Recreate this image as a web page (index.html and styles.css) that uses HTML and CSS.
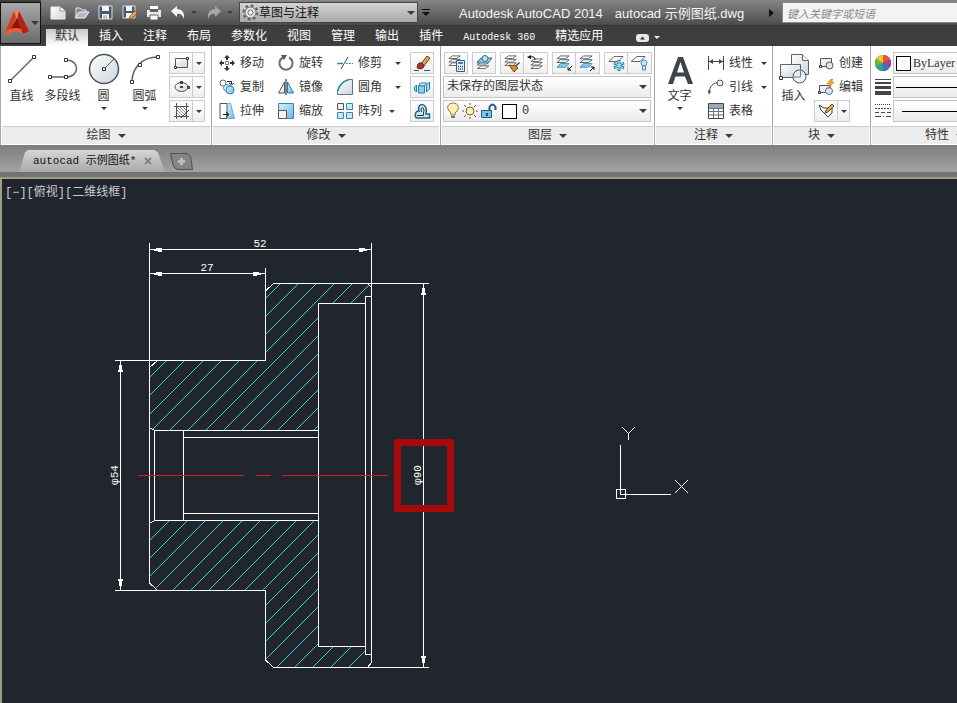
FILE: index.html
```html
<!DOCTYPE html>
<html lang="zh-CN">
<head>
<meta charset="utf-8">
<title>Autodesk AutoCAD 2014 - autocad 示例图纸.dwg</title>
<link rel="stylesheet" href="styles.css">
</head>
<body>
<svg class="defs" aria-hidden="true">
  <defs>
    <linearGradient id="blue" x1="0" y1="0" x2="1" y2="1"><stop offset="0" stop-color="#d9eff9"/><stop offset="1" stop-color="#6db8de"/></linearGradient>
    <linearGradient id="grey" x1="0" y1="0" x2="1" y2="1"><stop offset="0" stop-color="#fff"/><stop offset="1" stop-color="#ccd4da"/></linearGradient>
    <symbol id="layers" viewBox="0 0 16 16"><path d="M5 1h9l-4 3H1zM5 5h9l-4 3H1zM5 9h9l-4 3H1z" fill="#fff" stroke="#555c64"/></symbol>
    <symbol id="layers-blue" viewBox="0 0 16 16"><path d="M5 9h9l-4 4H1z" fill="#85c8ea" stroke="#3e8fb8"/><path d="M5 1h9l-4 3H1zM5 5h9l-4 3H1z" fill="#fff" stroke="#555c64"/></symbol>
  </defs>
</svg>

<header class="top">
  <button class="app" aria-label="应用程序菜单">
    <svg width="24" height="28" viewBox="0 0 24 28"><path d="M9 2h5L3 26l-3-3z" fill="#d63a1e"/><path d="M9 2h5l10 20-6 3z" fill="#b8200f"/><path d="M9 2h5l-2 9z" fill="#f58150"/><path d="M12 9l-7 12q6-3 11-1z" fill="#8c150a"/><path d="M0 23l3 3q7-6 15-1l-2-5Q8 17 0 23z" fill="#ed5a35"/></svg>
    <span class="caret dark"></span>
  </button>
  <div class="bars">
    <div class="titlebar">
      <div class="quick">
        <button aria-label="新建"><svg width="16" height="16"><path d="M1 2h9l5 4v8H1z" fill="url(#grey)" stroke="#eee"/><path d="M10 2v4h5" fill="#fff" stroke="#8b949b"/></svg></button>
        <button aria-label="打开"><svg width="16" height="16"><path d="M2 13V3h4l2 2h4v2" fill="#7d868f" stroke="#e9edf0"/><path d="M1 13l4-6h10l-4 6z" fill="#aebac5" stroke="#eef"/></svg></button>
        <button aria-label="保存"><svg width="16" height="16"><path d="M1 1h13v13H1z" fill="#49596d" stroke="#d8dde2"/><path d="M4 1h7v5H4zM4 9h7v5H4z" fill="#f3f5f6"/><path d="M5 11h4M5 13h4" stroke="#8b949b"/></svg></button>
        <button aria-label="另存为"><svg width="16" height="16"><path d="M1 1h12v12H1z" fill="#49596d" stroke="#d8dde2"/><path d="M4 1h6v5H4zM4 8h6v5H4z" fill="#f3f5f6"/><path d="M7 14l1-3 5-5 2 2-5 5z" fill="#f0a94a" stroke="#73502a" stroke-width=".7"/></svg></button>
        <button aria-label="打印"><svg width="16" height="16"><path d="M4 1h8v5H4z" fill="#fff"/><path d="M1 5h14v7H1z" fill="#e7eaec"/><path d="M4 4h8v3H4z" fill="#58626b"/><path d="M4 10h8v5H4z" fill="#fff" stroke="#58626b"/></svg></button>
        <button aria-label="放弃"><svg width="16" height="16"><path d="M1 6l6-5v3q8 0 7 10-2-6-7-5v3z" fill="#f4f4f4"/></svg></button>
        <button class="thin" aria-label="放弃列表"><span class="caret dark small"></span></button>
        <button class="redo" aria-label="重做"><svg width="16" height="16"><path d="M15 6L9 1v3Q1 4 2 14q2-6 7-5v3z" fill="#a6a6a6"/></svg></button>
        <button class="thin" aria-label="重做列表"><span class="caret dark small"></span></button>
      </div>
      <button class="workspace"><svg width="17" height="17" viewBox="0 0 17 17"><circle cx="8.500" cy="8.500" r="7" fill="none" stroke="#5c5c5c" stroke-width="2" stroke-dasharray="2.750 2.750"/><circle cx="8.500" cy="8.500" r="5.500" fill="#e4e4e4" stroke="#666"/><circle cx="8.500" cy="8.500" r="2.500" fill="#fff" stroke="#666"/></svg><span class="low">草图与注释</span><span class="caret dark end"></span></button>
      <button class="more" aria-label="自定义"><svg width="8" height="8"><path d="M0 0h8v1H0zM0 3h8L4 7z" fill="#111"/></svg></button>
      <div class="caption"><span>Autodesk AutoCAD 2014</span><span>autocad 示例图纸.dwg</span></div>
      <svg class="play" width="5" height="8"><path d="M0 0l5 4-5 4z" fill="#111"/></svg>
      <input class="search" type="text" placeholder="键入关键字或短语" aria-label="键入关键字或短语">
    </div>
    <nav class="tabs">
      <a class="on" href="#">默认</a><a href="#">插入</a><a href="#">注释</a><a href="#">布局</a><a href="#">参数化</a><a href="#">视图</a><a href="#">管理</a><a href="#">输出</a><a href="#">插件</a><a href="#">Autodesk 360</a><a href="#">精选应用</a>
      <button class="min" aria-label="最小化"><svg width="13" height="8"><rect width="13" height="8" rx="3" fill="#e6e6e6"/><path d="M4 5.500h5l-2.500-3z" fill="#333"/></svg><span class="caret light"></span></button>
    </nav>
  </div>
</header>

<main class="ribbon">
  <section class="panel draw">
    <div class="tools">
      <button class="big"><svg width="32" height="32"><path d="M4 28L28 4" stroke="#5d6770" stroke-width="1.500"/><path d="M2.500 26.500h3v3h-3zM26.500 2.500h3v3h-3z" fill="#fff" stroke="#333"/></svg>直线</button>
      <button class="big"><svg width="32" height="32"><path d="M3 24h16c14 0 14-17 0-17" fill="none" stroke="#5d6770" stroke-width="1.500"/><path d="M1.500 22.500h3v3h-3zM17.500 22.500h3v3h-3zM17.500 5.500h3v3h-3z" fill="#fff" stroke="#333"/></svg>多段线</button>
      <button class="big"><svg width="32" height="32"><circle cx="16" cy="16" r="14.500" fill="url(#grey)" stroke="#4d565e" stroke-width="1.500"/><path d="M16 16L26 6" stroke="#4d565e"/><path d="M14.500 14.500h3v3h-3z" fill="#fff" stroke="#333"/></svg>圆<span class="caret dark small"></span></button>
      <button class="big"><svg width="32" height="32"><path d="M3 29C3 16 12 4 29 4" fill="none" stroke="#5d6770" stroke-width="1.500"/><path d="M1.500 27.500h3v3h-3zM9.500 10.500h3v3h-3zM27.500 2.500h3v3h-3z" fill="#fff" stroke="#333"/></svg>圆弧<span class="caret dark small"></span></button>
      <div class="stack">
        <button class="box split" aria-label="矩形"><svg width="17" height="16"><path d="M2.500 3.500h12v9h-12z" fill="url(#grey)" stroke="#555"/><path d="M1.500 11.500h2v2h-2zM13.500 2.500h2v2h-2z" fill="#fff" stroke="#333"/></svg><i><b class="caret dark small"></b></i></button>
        <button class="box split" aria-label="椭圆"><svg width="17" height="16"><ellipse cx="8.500" cy="8" rx="6.500" ry="4.500" fill="url(#grey)" stroke="#4d565e"/><path d="M7 2h3v3H7zM7 7h3v2H7zM14 7h3v3h-3z" fill="#444"/></svg><i><b class="caret dark small"></b></i></button>
        <button class="box split" aria-label="图案填充"><svg width="17" height="16"><path d="M3.500 0v16M1 3.500h15M1 13.500h15M13.500 0v16" stroke="#555"/><path d="M4 7l6 6M4 10l3 3M7 4l6 6M10 4l3 3M4 4l9 9" stroke="#999"/><path d="M16 7l-8 8" stroke="#444"/></svg><i><b class="caret dark small"></b></i></button>
      </div>
    </div>
    <h2>绘图<span class="caret dark"></span></h2>
  </section>

  <section class="panel modify">
    <div class="tools">
      <button class="tool"><svg width="16" height="16"><path d="M8 0l3 3H9v2H7V3H5zM8 16l3-3H9v-2H7v2H5zM0 8l3-3v2h2v2H3v2zM16 8l-3-3v2h-2v2h2v2z" fill="#333"/><path d="M6.500 6.500h3v3h-3z" fill="#fff" stroke="#777"/></svg><span class="low">移动</span></button>
      <button class="tool"><svg width="16" height="16"><path d="M5 2.500A6.500 6.500 0 1 0 11 2.500" fill="none" stroke="#666e76" stroke-width="2"/><path d="M3 0h6L6 5z" fill="#4d565e"/></svg><span class="low">旋转</span></button>
      <button class="tool"><svg width="16" height="16"><path d="M0 8.500h6" stroke="#278fae" stroke-width="1.500"/><path d="M9 8.500h2M12 8.500h2M15 8.500h1" stroke="#278fae"/><path d="M4 14L11 2" stroke="#444"/></svg><span class="low">修剪</span><span class="caret dark small far"></span></button>
      <button class="box" aria-label="删除"><svg width="17" height="17"><path d="M7 9l6-8 3 2-6 8z" fill="#eda43c" stroke="#56412d"/><path d="M4 9q2-2 4-1t2 4l-3 2-4-1z" fill="#b3341d" stroke="#49352b"/><path d="M0 15.500h5M10 15.500h6" stroke="#3c5778"/></svg></button>
      <button class="tool"><svg width="16" height="16"><circle cx="4" cy="4" r="3" fill="#fff" stroke="#666"/><circle cx="8" cy="9" r="3.500" fill="#d4edf8" stroke="#489fc8"/><circle cx="11" cy="11" r="4" fill="url(#blue)" stroke="#3183ad"/><path d="M8 2.500h4.500V5M10 4l2.500 2L15 4" fill="none" stroke="#222"/></svg><span class="low">复制</span></button>
      <button class="tool"><svg width="16" height="16"><path d="M6.500 3v11h-6z" fill="#eee" stroke="#555"/><path d="M9.500 3v11h6z" fill="url(#blue)" stroke="#2b80aa"/><path d="M8 0v16" stroke="#111"/></svg><span class="low">镜像</span></button>
      <button class="tool"><svg width="16" height="16"><path d="M.500 15.500V12Q3 3 12 .500h3.500v15z" fill="url(#grey)" stroke="#5d7380"/><path d="M.500 12Q3 3 12 .500" fill="none" stroke="#2888b1" stroke-width="1.500"/></svg><span class="low">圆角</span><span class="caret dark small far"></span></button>
      <button class="box" aria-label="分解"><svg width="17" height="17"><path d="M4.500 7l2-3h6l-2 3z" fill="#d8f0fa" stroke="#2380aa"/><path d="M4.500 7h6v7h-6z" fill="#8ed0ee" stroke="#2380aa"/><path d="M12.500 6l3-3v7l-3 3zM2.500 6v7L.500 11V8z" fill="#a6dcf3" stroke="#2380aa"/></svg></button>
      <button class="tool"><svg width="16" height="16"><path d="M1 .500h7v15H1z" fill="#fff" stroke="#555"/><path d="M8.500.500h3l4 15h-7z" fill="url(#blue)" stroke="#6badcc"/><path d="M4 11.500h5M7 9l3 2.500L7 14" fill="none" stroke="#111"/></svg><span class="low">拉伸</span></button>
      <button class="tool"><svg width="16" height="16"><path d="M.500.500h15v15h-15z" fill="url(#blue)" stroke="#3487ae"/><path d="M.500 7.500h8v8h-8z" fill="#f7f7f7" stroke="#555"/></svg><span class="low">缩放</span></button>
      <button class="tool"><svg width="16" height="16"><path d="M.500.500h6v6h-6z" fill="#eee" stroke="#555"/><path d="M9.500.500h6v6h-6zM.500 9.500h6v6h-6zM9.500 9.500h6v6h-6z" fill="#c8e9f6" stroke="#3487ae"/></svg><span class="low">阵列</span><span class="caret dark small near"></span></button>
      <button class="box" aria-label="偏移"><svg width="17" height="17"><path d="M3 15h12.500v-4H12c3-12-10-12-7-3-4-1-5 7-2 7z" fill="#cbe8f4" stroke="#1d6687" stroke-width="1.500"/><path d="M3 12.500h6.500V10c2-7-4-7-2-1" fill="none" stroke="#333"/></svg></button>
    </div>
    <h2>修改<span class="caret dark"></span></h2>
  </section>

  <section class="panel layer">
    <div class="tools">
      <div class="row">
        <button class="box" aria-label="图层特性"><svg width="17" height="17"><use href="#layers" width="14" height="14"/><path d="M8.500 5.500h8v11h-8z" fill="#e2f2fa" stroke="#325f87"/><path d="M10 8h5M10 11.500h1M12 11.500h1M14 11.500h1M10 14h1M12 14h1M14 14h1" stroke="#26557e" stroke-width="1.500"/></svg></button>
        <button class="box" aria-label="图层隔离"><svg width="17" height="17"><use href="#layers" y="3" width="15" height="14"/><path d="M5 3h11l-4 5H1z" fill="#8ccdec" stroke="#376d8b"/><circle cx="9" cy="3.500" r="3" fill="#b9e2f5" stroke="#456a80"/></svg></button>
        <span class="group"><button class="box" aria-label="匹配"><svg width="17" height="17"><use href="#layers" width="14" height="14"/><path d="M15 7l1 1-4 4-1-1z" fill="#444"/><path d="M5 10l7 1 2 2-4 4z" fill="#d88c31" stroke="#744616"/></svg></button><button class="box" aria-label="上一个"><svg width="17" height="17"><use href="#layers" x="3" y="3" width="14" height="14"/><path d="M0 2l4-2v4z" fill="#111"/><path d="M4 2q4-1 4 3" fill="none" stroke="#111"/></svg></button></span>
        <span class="group"><button class="box" aria-label="冻结"><svg width="17" height="17"><use href="#layers-blue" width="15" height="15"/><path d="M16 11l-4 4m0-3v3h3" fill="none" stroke="#111"/></svg></button><button class="box" aria-label="解冻"><svg width="17" height="17"><use href="#layers-blue" width="15" height="15"/><path d="M11 16l4-4m-3 0h3v3" fill="none" stroke="#111"/></svg></button></span>
        <span class="group"><button class="box" aria-label="图层冻结"><svg width="17" height="17"><path d="M6 1.500h9l-5 5H1z" fill="#fff" stroke="#666"/><path d="M11 5v11M6 8l10 5M6 13l10-5" stroke="#2d8aa0" stroke-width="3"/><path d="M11 6v9M7 8l8 5M7 13l8-5" stroke="#ccecf2"/></svg></button><button class="box" aria-label="图层关闭"><svg width="17" height="17"><path d="M6 1.500h8l-5 5H0z" fill="#fff" stroke="#666"/><circle cx="13" cy="8" r="3" fill="#c4e6f8" stroke="#488eb6"/><path d="M11.500 11h3v4h-3z" fill="#d9eef8" stroke="#488eb6"/></svg></button></span>
      </div>
      <button class="combo">未保存的图层状态<span class="caret dark end"></span></button>
      <button class="combo current"><svg width="12" height="18"><path d="M4 11C-2 6 1 1 6 1s8 5 2 10v2H4z" fill="#fff0b8" stroke="#8e7435"/><path d="M4 14h4v2H4z" fill="#777"/></svg><svg width="16" height="16"><circle cx="8" cy="8" r="4" fill="#fff0a6" stroke="#776438"/><path d="M8 0v2M8 14v2M0 8h2M14 8h2M2 2l2 2M12 12l2 2M2 14l2-2M12 4l2-2" stroke="#655536"/></svg><svg width="16" height="16"><path d="M.500 7.500h10v7H.500z" fill="#77c1e3" stroke="#215d80"/><path d="M8.500 8V4q3-5 6 0v3" fill="none" stroke="#215d80" stroke-width="2"/><path d="M5 10h2v3H5z" fill="#205677"/></svg><i class="swatch"></i>0<span class="caret dark end"></span></button>
    </div>
    <h2>图层<span class="caret dark"></span></h2>
  </section>

  <section class="panel note">
    <div class="tools">
      <button class="big"><svg width="32" height="32"><path d="M4 31L14 4h5l10 27h-5l-3-7.500h-9.500L9 31zM13 19.500h7L16.500 9z" fill="#3e444a"/></svg>文字<span class="caret dark small"></span></button>
      <div class="stack">
        <button class="tool"><svg width="16" height="16"><path d="M.500 1v14M15.500 1v14M1 6.500h14" stroke="#444"/><path d="M1 6.500l4-2.500v5zM15 6.500L11 4v5z" fill="#444"/></svg><span class="low">线性</span><span class="caret dark small far"></span></button>
        <button class="tool"><svg width="16" height="16"><path d="M1 14C2 7 5 4 9 4" fill="none" stroke="#444"/><circle cx="12" cy="4" r="3" fill="#eee" stroke="#555"/><path d="M0 11l3 1-2 4z" fill="#444"/></svg><span class="low">引线</span><span class="caret dark small far"></span></button>
        <button class="tool"><svg width="16" height="16"><path d="M.500.500h15v15H.500z" fill="#fff" stroke="#444"/><path d="M1 1h14v4H1z" fill="#99a7bd"/><path d="M1 5.500h14M1 8.500h14M1 12h14M5.500 5v10M10.500 5v10" stroke="#667381"/></svg><span class="low">表格</span></button>
      </div>
    </div>
    <h2>注释<span class="caret dark"></span></h2>
  </section>

  <section class="panel block">
    <div class="tools">
      <button class="big"><svg width="32" height="32"><path d="M13.500 1.500h11l6 6v14h-17z" fill="url(#grey)" stroke="#59626a"/><path d="M24.500 1.500v6h6" fill="#fff" stroke="#59626a"/><path d="M2.500 11.500h20v13h-20z" fill="url(#grey)" stroke="#59626a"/><circle cx="21.500" cy="23.500" r="6.500" fill="#eef2f5cc" stroke="#4e575e"/><path d="M22.500 17v7h-7" fill="none" stroke="#7d868d"/><path d="M1.500 23.500h3v3h-3z" fill="#fff" stroke="#333"/></svg>插入</button>
      <div class="stack">
        <button class="tool"><svg width="16" height="16"><path d="M2.500 3.500h11v8h-11z" fill="#eceff1" stroke="#555"/><circle cx="11.500" cy="10.500" r="3.500" fill="#e1e5e8" stroke="#555"/><path d="M1.500 10.500h2v2h-2z" fill="#fff" stroke="#333"/></svg><span class="low">创建</span></button>
        <button class="tool"><svg width="16" height="16"><path d="M1.500 6.500h11v7h-11z" fill="#eceff1" stroke="#555"/><circle cx="11" cy="12" r="3.500" fill="#d5e8f1" stroke="#48768c"/><path d="M.500 12.500h2v2h-2z" fill="#fff" stroke="#333"/><path d="M13 0l-4 5h3l-2 5 6-7h-3l2-3z" fill="#f6b43c" stroke="#bb6a18" stroke-width=".600"/></svg><span class="low">编辑</span></button>
        <button class="box split" aria-label="编辑属性"><svg width="17" height="16"><path d="M1 2l5 3h8v5l-4 4-7-7z" fill="#f5f5f5" stroke="#444"/><path d="M7 10l1-3 6-6 2 2-6 6z" fill="#f1a33e" stroke="#744d21"/></svg><i><b class="caret dark small"></b></i></button>
      </div>
    </div>
    <h2>块<span class="caret dark"></span></h2>
  </section>

  <section class="panel props">
    <div class="tools">
      <svg width="16" height="16"><circle cx="8" cy="8" r="8" fill="#555"/><path d="M8 8V0a8 8 0 0 1 7 4z" fill="#e65a32"/><path d="M8 8l7-4a8 8 0 0 1 0 8z" fill="#b33d8c"/><path d="M8 8l7 4a8 8 0 0 1-7 4z" fill="#3973c5"/><path d="M8 8v8a8 8 0 0 1-7-4z" fill="#35a08e"/><path d="M8 8l-7 4a8 8 0 0 1 0-8z" fill="#64b844"/><path d="M8 8L1 4a8 8 0 0 1 7-4z" fill="#f4c52e"/></svg>
      <button class="combo"><i class="swatch"></i>ByLayer</button>
      <svg width="16" height="16"><path d="M0 .500h16" stroke="#444"/><path d="M0 4h16" stroke="#444" stroke-width="2"/><path d="M0 8.500h16" stroke="#444" stroke-width="3"/><path d="M0 14h16" stroke="#444" stroke-width="4"/></svg>
      <button class="combo" aria-label="线宽"><i class="rule"></i></button>
      <svg width="16" height="16"><path d="M0 1.500h16" stroke="#444" stroke-dasharray="1 1"/><path d="M0 5.500h16" stroke="#444" stroke-dasharray="2 1"/><path d="M0 9.500h16" stroke="#444" stroke-dasharray="4 2"/><path d="M0 13.500h16" stroke="#444" stroke-dasharray="6 2 1 2"/></svg>
      <button class="combo" aria-label="线型"><i class="rule inset"></i></button>
    </div>
    <h2>特性<span class="caret dark"></span></h2>
  </section>
</main>

<div class="files">
  <div class="file"><a href="#">autocad 示例图纸*</a><button aria-label="关闭"><svg width="8" height="8"><path d="M1 1l6 6M7 1L1 7" stroke="#828282" stroke-width="2"/></svg></button></div>
  <button class="add" aria-label="新图形"><svg width="23" height="17"><path d="M.500.500H15q5 0 6 5l1.500 11H9q-5 0-6-5z" fill="#858585" stroke="#505050"/><path d="M11.500 5v7M8 8.500h7" stroke="#bbb" stroke-width="3"/></svg></button>
</div>

<div class="canvas">
  <p class="view">[−][俯视][二维线框]</p>
  <svg class="drawing" role="img" aria-label="零件剖面图">
    <defs>
      <clipPath id="section">
        <path d="M150 367l7-6H266V291l8-7h93l5 5v8h-6v7h-47v127H155l-5-3zM155 521h164v126h47v8h6v7l-5 5h-93l-8-7v-69H158l-8-7v-60z"/>
      </clipPath>
    </defs>
    <g transform="translate(-2 -179)" fill="none" stroke-width="1" shape-rendering="crispEdges">
      <path class="hatch" shape-rendering="auto" clip-path="url(#section)" d="M247 280l-390 390M265 280l-390 390M284 280l-390 390M302 280l-390 390M320 280l-390 390M338 280l-390 390M356 280l-390 390M374 280l-390 390M392 280l-390 390M410 280l-390 390M428 280l-390 390M446 280l-390 390M464 280l-390 390M483 280l-390 390M501 280l-390 390M519 280l-390 390M537 280l-390 390M555 280l-390 390M573 280l-390 390M591 280l-390 390M609 280l-390 390M627 280l-390 390M645 280l-390 390M664 280l-390 390M682 280l-390 390M700 280l-390 390M718 280l-390 390M736 280l-390 390"/>
      <path class="ink" d="M149.500 243v340l8 7.500H265.500V660l8 7.500h94l4-5V243M115 360.500h150.500V268M265.500 360.500V291l8-7.500h155M149.500 367.500l8-7M367.500 283.500l4 4M318.500 646.500V303.500h47M318.500 646.500h46.500M371.500 296.500h-6V654.500h6M149.500 427.500l5 3H318.500M318.500 520.500H154.500l-5 3M154.500 430.500v90M183.500 430.500v90M183.500 437.500h135M183.500 513.500h135M149.500 249.500h222M149.500 273.500h116M120.500 361v229M115 590.500h45M367 667.500h62M423.500 284v383"/>
      <path class="fill" d="M150 249.500l12-2v5zM371 249.500l-12-2v5zM150 273.500l12-2v5zM265 273.500l-12-2v5zM120.500 361l-2.500 11h5zM120.500 590l-2.500-11h5zM423.500 284l-2.500 11h5zM423.500 667l-2.500-11h5z"/>
      <path class="axis" d="M138 475.500h106M256 475.500h15M282 475.500h106"/>
      <rect class="mark" x="397.500" y="442.500" width="53" height="66"/>
      <path class="ink" d="M620.500 445v49.500h50M616.500 489.500h9v9h-9z"/>
      <path class="ink" shape-rendering="auto" d="M622 427l6.500 6.500L635 427M628.500 433v7M675 480l13 13M688 480l-13 13"/>
      <g class="dim"><text x="260" y="247">52</text><text x="207" y="271">27</text><text transform="translate(118 475) rotate(-90)">φ54</text><text transform="translate(421 475) rotate(-90)">φ90</text></g>
    </g>
  </svg>
</div>
</body>
</html>
```
FILE: styles.css
```css
* { box-sizing: border-box; }
body {
  margin: 0;
  height: 100vh;
  display: flex;
  flex-direction: column;
  overflow: hidden;
  background: #21262e;
  color: #333;
  font: 12px/16px "Liberation Mono", "Noto Sans CJK SC", monospace;
}
button {
  margin: 0;
  padding: 0;
  border: 0;
  background: none;
  color: inherit;
  font: inherit;
  display: flex;
  align-items: center;
  white-space: nowrap;
}
a { color: inherit; text-decoration: none; }
svg { flex: none; display: block; }
.defs { position: absolute; width: 0; height: 0; }
.low { padding-top: 2px; }

.caret {
  flex: none;
  border: 4px solid transparent;
  border-top-color: currentColor;
  border-bottom: 0;
}
.caret.dark { color: #3a3a3a; }
.caret.light { color: #eee; border-width: 3px 3px 0; }
.caret.small { border-width: 3px 3px 0; }
.caret.end { margin-left: auto; }

/* title bar and ribbon tabs */
.top { display: flex; height: 46px; background: #3e3e3e; }
.app {
  flex: none;
  width: 41px;
  height: 42px;
  margin-top: 2px;
  padding-left: 4px;
  gap: 2px;
  border: 1px solid #111;
  background: linear-gradient(#a8a8a8, #6c6c6c);
}
.bars { flex: 1; min-width: 0; }
.titlebar {
  display: flex;
  align-items: center;
  height: 26px;
  background: linear-gradient(#858585, #4c4c4c);
  border-bottom: 1px solid #333;
}
.quick { display: flex; gap: 8px; padding-left: 9px; width: 198px; flex: none; }
.quick .thin { width: 8px; margin: 0 -3px; }
.quick .redo { margin-left: 2px; }
.workspace {
  flex: none;
  width: 179px;
  height: 21px;
  padding: 0 2px;
  border: 1px solid #444;
  background: linear-gradient(#d4d4d4, #a9a9a9);
  color: #111;
}
.more { margin: 0 29px 0 4px; }
.caption {
  display: flex;
  gap: 12px;
  padding-top: 2px;
  color: #f4f4f4;
  font: 13px/20px "Liberation Sans", "Noto Sans CJK SC", sans-serif;
  white-space: nowrap;
}
.play { margin-left: auto; }
.search {
  flex: none;
  width: 175px;
  height: 21px;
  margin-left: 8px;
  padding: 0 4px;
  border: 1px solid #888;
  border-right: 0;
  background: #f3f3f3;
  font: italic 11px/16px "Noto Sans CJK SC", sans-serif;
}
.search::placeholder { color: #8a8a8a; }
.tabs { display: flex; align-items: flex-end; height: 20px; padding-left: 4px; color: #fff; }
.tabs a {
  height: 17px;
  padding: 0 10px;
  line-height: 17px;
  white-space: nowrap;
}
.tabs a:nth-of-type(10) { font-size: 10px; }
.tabs .on { background: linear-gradient(#c8c8c8, #fff); color: #333; margin: 0 1px; padding: 0 9px; }
.tabs .min { height: 17px; margin-left: 23px; gap: 5px; }

/* ribbon */
.ribbon { display: flex; height: 99px; background: #fff; overflow: hidden; border-left: 1px solid #aaa; }
.panel {
  flex: none;
  display: flex;
  flex-direction: column;
  border-right: 1px solid #a8a8a8;
}
.tools { display: flex; height: 80px; padding-top: 5px; }
.panel h2 {
  display: flex;
  align-items: center;
  justify-content: center;
  gap: 7px;
  height: 18px;
  margin: 0 1px;
  border-top: 1px solid #ccc;
  background: #ececec;
  font-size: 12px;
  font-weight: 400;
}
.draw { width: 211px; }
.modify { width: 229px; }
.layer { width: 214px; }
.note { width: 118px; }
.block { width: 98px; }
.props { width: 148px; }

.big { flex-direction: column; width: 41px; height: 72px; padding-top: 2px; line-height: 24px; }
.big .caret { margin-top: -2px; }
.stack { display: flex; flex-direction: column; }
.tool { height: 24px; gap: 5px; }
.box {
  width: 24px;
  height: 22px;
  margin: 1px 0;
  border: 1px solid #ccc;
  background: linear-gradient(#fff, #efefef);
  justify-content: center;
}
.split { width: 36px; justify-content: flex-start; padding-left: 3px; }
.split i {
  display: flex;
  align-items: center;
  justify-content: center;
  height: 20px;
  width: 12px;
  margin-left: auto;
  border-left: 1px solid #ccc;
}
.combo {
  width: 208px;
  height: 22px;
  margin: 1px 0;
  padding: 0 3px;
  border: 1px solid #c4c4c4;
  background: linear-gradient(#fff, #ececec);
}
.swatch { flex: none; width: 15px; height: 15px; border: 1px solid #000; background: #fff; }

.draw .stack { margin-left: 4px; }
.modify .tools { display: grid; grid-template-columns: 59px 59px 73px 24px; grid-auto-rows: 24px; padding-left: 7px; }
.tool .far { margin-left: 8px; }
.tool .near { margin-left: 2px; }
.note .tool .far { margin-left: 3px; }
.layer .tools { flex-direction: column; padding-left: 2px; }
.row { display: flex; gap: 4px; padding-left: 1px; }
.group { display: flex; }
.group .box + .box { border-left: 0; }
.current { gap: 3px; }
.current .swatch { margin: 0 2px; }
.note .tools { padding-left: 4px; }
.note .stack { margin-left: 8px; }
.block .tool { margin-left: 4px; }
.props .tools { display: grid; grid-template-columns: 16px 1fr; grid-auto-rows: 24px; align-items: center; gap: 0 2px; padding-left: 4px; }
.props .combo { width: 100%; gap: 2px; font: 12px/16px "Liberation Serif", serif; padding-left: 2px; }
.rule { width: 100%; height: 1px; background: #000; }
.rule.inset { margin-left: 6px; }

/* drawing tabs */
.files {
  display: flex;
  height: 32px;
  padding: 5px 0 0 17px;
  background: linear-gradient(#7e7e7e, #a2a2a2 27px, #727272 27px, #727272);
}
.file {
  display: flex;
  align-items: center;
  gap: 8px;
  height: 22px;
  padding: 0 14px 0 16px;
  background: linear-gradient(#d6d6d6, #a9a9a9);
  clip-path: polygon(0 100%, 3px 90%, 8px 10%, 11px 0, 137px 0, 141px 10%, 147px 90%, 100% 100%);
  color: #111;
}
.file a { font: 11px/16px "Liberation Mono", "Noto Sans CJK SC", monospace; }
.add { height: 22px; margin-left: 4px; }

/* model space */
.canvas { flex: 1; display: grid; border: solid #a59c88; border-width: 2px 0 0 2px; min-height: 0; }
.canvas > * { grid-area: 1 / 1; }
.view { margin: 6px 0 0 3px; color: #ccc; }
.drawing { width: 100%; height: 100%; }
.hatch { stroke: #35d0d4; }
.ink { stroke: #fff; }
.fill { fill: #fff; }
.axis { stroke: #d81a20; }
.mark { stroke: #a40a0a; stroke-width: 7px; }
.dim { fill: #fff; font: 11px "Liberation Mono", monospace; text-anchor: middle; }
```
